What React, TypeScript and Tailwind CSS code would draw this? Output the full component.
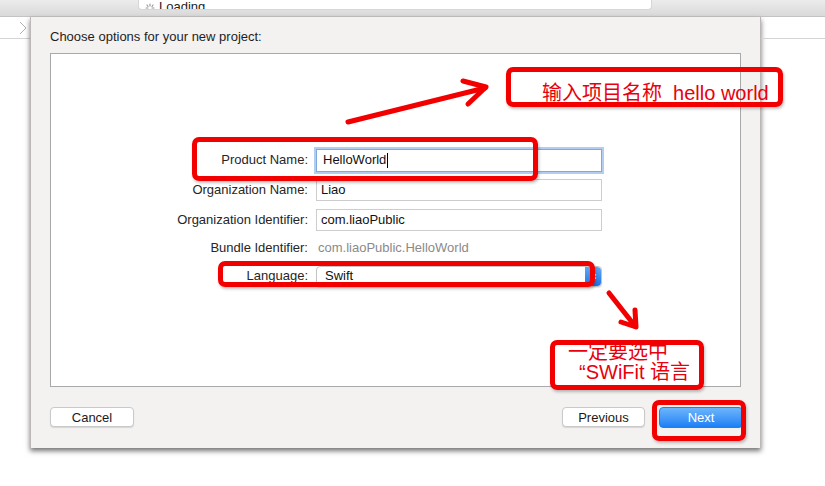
import React from "react";

const font = { fontFamily: '"Liberation Sans", Arial, "Noto Sans CJK SC", sans-serif' };

interface FieldProps {
	label: string;
	children: React.ReactNode;
}

const Field: React.FC<FieldProps> = ({ label, children }) => (
	<>
		<div className="flex items-center justify-end text-[13px] text-[#262626]">{label}</div>
		<div className="flex items-center">{children}</div>
	</>
);

const RedBox: React.FC<{ className: string; children?: React.ReactNode }> = ({ className, children }) => (
	<div
		className={
			"absolute rounded-[7px] border-[5px] border-[#f20000] shadow-[1px_2px_3px_rgba(0,0,0,0.25)] pointer-events-none " +
			className
		}
	>
		{children}
	</div>
);

const App: React.FC = () => {
	return (
		<div className="relative w-[825px] h-[486px] overflow-hidden bg-white" style={font}>
			{/* toolbar */}
			<div className="h-[17px] bg-gradient-to-b from-[#ececec] to-[#d9d9d9] border-b border-[#c4c4c4]">
				<div className="ml-[138px] w-[514px] h-[10px] overflow-hidden rounded-b-[4px] bg-white border border-t-0 border-[#d6d6d6] flex items-end gap-[4px] pl-[6px]">
					<svg width="10" height="10" viewBox="0 0 10 10" className="mb-[-4px]">
						<g stroke="#9a9a9a" strokeWidth="1.2" strokeLinecap="round">
							<line x1="5" y1="1" x2="5" y2="3" />
							<line x1="8" y1="2" x2="7" y2="3.5" />
							<line x1="2" y1="2" x2="3" y2="3.5" />
							<line x1="9" y1="5" x2="7" y2="5" />
							<line x1="1" y1="5" x2="3" y2="5" />
						</g>
					</svg>
					<span className="text-[13px] leading-[13px] mb-[-4px] text-[#222]">Loading</span>
				</div>
			</div>

			<div className="flex">
				{/* left strip */}
				<div className="w-[30px] h-[22px] border-b border-[#d4d4d4] flex items-end">
					<svg width="12" height="14" viewBox="0 0 12 14" className="ml-[18px] mb-[3px]">
						<polyline points="2,1 8,7 2,13" fill="none" stroke="#b0b0b0" strokeWidth="1" />
					</svg>
				</div>

				{/* sheet */}
				<div className="w-[731px] h-[431px] flex flex-col bg-[#f4f1f1] border-x border-[#bdb8b8] shadow-[0_3px_5px_rgba(0,0,0,0.55)] px-[19px]">
					<div className="pt-[12px] pb-[8px] h-[36px] text-[13px] leading-[16px] text-[#1e1e1e]">
						Choose options for your new project:
					</div>
					<div className="h-[334px] bg-white border border-[#a9a9a9] pt-[95px]">
						<div className="grid grid-cols-[257px_286px] gap-x-[8px] gap-y-[8px] grid-rows-[22px_22px_22px_18px_22px]">
							<Field label="Product Name:">
								<div className="w-full h-[23px] border border-[#7fa8df] shadow-[0_0_0_2px_#b3cdf0] bg-white flex items-center pl-[6px] text-[13px] text-[#111]">
									HelloWorld
									<span className="inline-block w-px h-[15px] bg-black ml-px" />
								</div>
							</Field>
							<Field label="Organization Name:">
								<div className="w-full h-[22px] border border-[#cdcdcd] bg-white flex items-center pl-[4px] text-[13px] text-[#111]">
									Liao
								</div>
							</Field>
							<Field label="Organization Identifier:">
								<div className="w-full h-[22px] border border-[#cdcdcd] bg-white flex items-center pl-[4px] text-[13px] text-[#111]">
									com.liaoPublic
								</div>
							</Field>
							<Field label="Bundle Identifier:">
								<div className="pl-[2px] text-[13px] text-[#8a8a8a]">com.liaoPublic.HelloWorld</div>
							</Field>
							<Field label="Language:">
								<div className="w-full h-[21px] rounded-[4px] border border-[#c4c4c4] bg-white flex items-center text-[13px] text-[#111] shadow-[0_1px_1px_rgba(0,0,0,0.1)]">
									<span className="flex-1 pl-[8px]">Swift</span>
									<div className="w-[16px] h-full rounded-r-[4px] bg-gradient-to-b from-[#5ea8f6] to-[#1c71e6] flex flex-col items-center justify-center gap-[1px]">
										<svg width="7" height="4" viewBox="0 0 7 4">
											<polyline points="1,3.5 3.5,1 6,3.5" fill="none" stroke="#fff" strokeWidth="1.2" />
										</svg>
										<svg width="7" height="4" viewBox="0 0 7 4">
											<polyline points="1,0.5 3.5,3 6,0.5" fill="none" stroke="#fff" strokeWidth="1.2" />
										</svg>
									</div>
								</div>
							</Field>
						</div>
					</div>
					<div className="flex items-start pt-[20px]">
						<button className="w-[84px] h-[20px] rounded-[4px] bg-white border border-[#c9c9c9] shadow-[0_1px_1px_rgba(0,0,0,0.12)] text-[13px] text-[#1a1a1a] leading-none">
							Cancel
						</button>
						<div className="flex-1" />
						<button className="w-[83px] h-[20px] rounded-[4px] bg-white border border-[#c9c9c9] shadow-[0_1px_1px_rgba(0,0,0,0.12)] text-[13px] text-[#1a1a1a] leading-none">
							Previous
						</button>
						<button className="ml-[14px] mr-[-2px] w-[84px] h-[21px] rounded-[4px] bg-gradient-to-b from-[#6cb5fb] to-[#1b7ff5] border border-[#2a7de0] text-[13px] text-white leading-none">
							Next
						</button>
					</div>
				</div>

				{/* right strip */}
				<div className="flex-1 h-[22px] border-b border-[#d4d4d4]" />
			</div>

			{/* annotations */}
			<svg className="absolute inset-0 pointer-events-none" width="825" height="486" viewBox="0 0 825 486">
				<g stroke="#f20000" strokeWidth="5" strokeLinecap="round" strokeLinejoin="round" fill="none">
					<line x1="348" y1="122" x2="485" y2="88" />
					<polyline points="463,81 486,87 468,104" />
					<line x1="609" y1="293" x2="635" y2="326" />
					<polyline points="635,310 636,327 621,322" />
				</g>
			</svg>

			<RedBox className="left-[192px] top-[137px] w-[346px] h-[44px]" />
			<RedBox className="left-[218px] top-[261px] w-[377px] h-[26px]" />
			<RedBox className="left-[506px] top-[67px] w-[277px] h-[40px]">
				<div className="pl-[31px] pt-[10px] text-[20px] leading-[22px] text-[#e8000c] whitespace-nowrap">
					输入项目名称&nbsp;&nbsp;hello world
				</div>
			</RedBox>
			<RedBox className="left-[550px] top-[340px] w-[154px] h-[50px]">
				<div className="pl-[13px] mt-[-3px] text-[20px] leading-[20px] text-[#e8000c] whitespace-nowrap">
					<div>一定要选中</div>
					<div className="pl-[11px]">“SWiFit 语言</div>
				</div>
			</RedBox>
			<RedBox className="left-[652px] top-[400px] w-[94px] h-[41px]" />
		</div>
	);
};

export default App;
